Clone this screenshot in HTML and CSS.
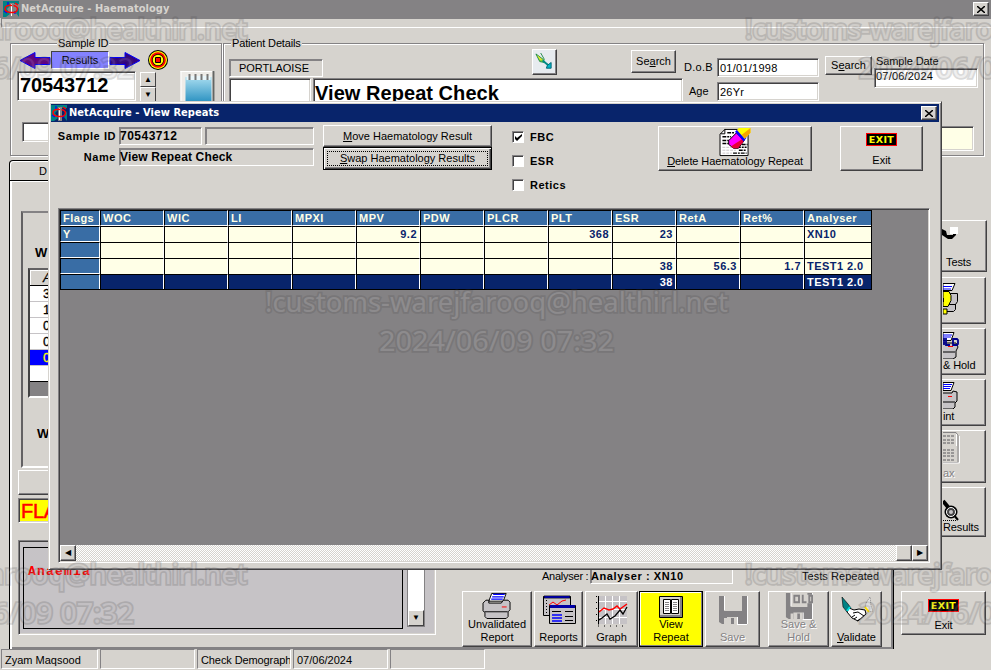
FILE: index.html
```
<!DOCTYPE html>
<html lang="en">
<head>
<meta charset="utf-8">
<title>NetAcquire - Haematology</title>
<link rel="stylesheet" href="styles.css">
</head>
<body>
<svg width="0" height="0" class="defs">
  <defs>
    <symbol id="app" viewBox="0 0 16 16"><path fill="#008284" d="M0 0h16v3H9L4 8l3 5-4 3H0z"/><path fill="#008284" d="M16 6l-3 6 3 4z"/><path fill="#848284" d="M7 2h4v14H7z"/><path fill="#fff" d="M8 3h1v12H8z"/><path fill="none" stroke="#00f" stroke-width="1.200" d="M5 1v4M1 10l3 2M12 10v3"/><path fill="none" stroke="#f00" stroke-width="1.500" d="M9 4.500c-4-.5-7 .5-7 3 0 5 12 5.500 12.500.5 0-2-2-3-4-3.500M12 2l3 2"/></symbol>
    <symbol id="printer" viewBox="0 0 32 28"><path fill="#fff" stroke="#000" d="M10.500 1.500h15l-3 8h-15z"/><path stroke="#00f" stroke-width="1.3" d="M12 2.500h12M11 5h12M10 7.500h12"/><path fill="#c6c3c6" stroke="#000" d="M4.500 8.500h3v3h13l2-3h5l2 2v8l-2 2v5l-2 2h-20l-2-2v-4l-2-2v-8z"/><path stroke="#000" fill="none" d="M3 20.500h24"/><path fill="#f00" d="M21 15h5v1h-5z"/></symbol>
    <symbol id="floppy" viewBox="0 0 30 30"><path fill="#848284" d="M1 1h5v15h18V1h5v28H9v-6H6v6H4l-3-2z"/><path fill="#fff" d="M6 1h1v14H6zM29 1h1v28h-1zM12 23h1v5h-1zM19 22h1v8h-1zM20 29h9v1h-9z"/><path fill="#d6d3ce" d="M9 22h10v7h-3v-6h-3v6H9z"/></symbol>
  </defs>
</svg>
<div class="desktop">
  <div class="bar main-bar"><svg class="app"><use href="#app"/></svg><span>NetAcquire - Haematology</span><i class="close"><svg viewBox="0 0 8 7"><path d="M0 0l8 7M8 0l-8 7"/></svg></i></div>
  <div class="strip"></div>
  <div class="top">
    <div class="group sample">
      <span class="legend">Sample ID</span>
      <div class="nav">
        <svg class="arrow" viewBox="0 0 32 18"><path fill="#630084" stroke="#00f" d="M1 9L16 1v5h15v7H16v4z"/></svg>
        <span class="results">Results</span>
        <svg class="arrow" viewBox="0 0 32 18"><path fill="#310084" stroke="#00f" d="M31 9L16 1v5H1v7h15v4z"/></svg>
        <svg class="target" viewBox="0 0 20 20"><circle cx="10" cy="10" r="10" fill="#000"/><circle cx="10" cy="10" r="9" fill="#ff0"/><circle cx="10" cy="10" r="7.800" fill="#f00"/><circle cx="10" cy="10" r="6" fill="#000"/><circle cx="10" cy="10" r="5.300" fill="#ff0"/><path fill="#f00" stroke="#000" d="M7.500 7.500h5v5h-5z"/></svg>
      </div>
      <div class="idrow">
        <div class="inset big idfield">70543712</div>
        <div class="spin"><i>&#9650;</i><i>&#9660;</i></div>
        <svg class="notebook" viewBox="0 0 34 36"><defs><linearGradient id="sky" x2="0" y2="1"><stop stop-color="#a8ddf0"/><stop offset="1" stop-color="#1383b8"/></linearGradient></defs><path fill="#eeece8" d="M0 0h34v36H0z"/><path fill="url(#sky)" d="M5 6h26v30H5z"/><path fill="#e9f6fa" d="M6 5h24v4H6z"/><path stroke="#777" stroke-width="2" d="M9 3v6M15 3v6M21 3v6M27 3v6"/><path stroke="#fff" d="M0 .5h34M.5 0v36"/><path stroke="#636563" stroke-width="2" d="M33 0v36"/></svg>
      </div>
      <div class="inset smallfield"></div>
    </div>
    <div class="group patient">
      <span class="legend">Patient Details</span>
      <div class="prow">
        <div class="who">
          <div class="tools">
            <div class="inset grey ward">PORTLAOISE</div>
            <div class="btn dart"><svg viewBox="0 0 20 20"><path fill="#84d731" stroke="#218a4a" d="M1 1l8 6 1 3-5-1zM6 0l4 7"/><path fill="#efe731" d="M2 2l6 5-3 0z"/><path fill="none" stroke="#008a84" stroke-width="2" d="M8 8l6 5"/><path fill="#00b6c6" stroke="#006573" d="M12 16l1-3 4-3v6z"/></svg></div>
            <div class="btn search"><span>Se<u>a</u>rch</span></div>
          </div>
          <div class="names"><div class="inset title"></div><div class="inset big name">View Repeat Check</div></div>
        </div>
        <div class="dob"><span>D.o.B</span><div class="inset">01/01/1998</div><span>Age</span><div class="inset">26Yr</div></div>
        <div class="btn search2"><span>S<u>e</u>arch</span></div>
        <div class="sdate"><span>Sample Date</span><div class="inset">07/06/2024</div></div>
      </div>
      <div class="inset cream"></div>
    </div>
  </div>
  <div class="middle">
    <div class="tabs">
      <div class="tab">D</div>
      <div class="page">
        <div class="frame">
          <b>W</b>
          <div class="counts"><i class="hd">A</i><i>3</i><i>1</i><i>0</i><i>0</i><i class="on">0</i><i class="last"></i></div>
          <b class="w2">W</b>
        </div>
        <div class="btn blank"></div>
        <div class="inset flag">FLA</div>
        <div class="foot">
          <div class="inset comment"><div class="note">Anaemia</div><div class="vscroll"><i>&#9660;</i></div></div>
          <div class="actions">
            <div class="anrow"><span>Analyser :</span><div class="inset grey bold">Analyser : XN10</div><span class="rep">Tests Repeated</span></div>
            <div class="buttons">
              <div class="btn b1"><svg class="pr"><use href="#printer"/></svg><span>Unvalidated<br>Report</span></div>
              <div class="btn b2"><svg class="ic" viewBox="0 0 34 30"><path fill="#c6c3c6" stroke="#000" d="M1.500 1.500h27v19h-27z"/><path fill="#00f" stroke="#000" stroke-width=".8" d="M2 1h26v2H2z"/><path stroke="#000" stroke-dasharray="1 2" d="M4.500 5v14"/><path fill="none" stroke="#f00" d="M7 10l4-3 4 3 5-4 4-1"/><path fill="#c6c3c6" stroke="#000" d="M7.500 10.500h26v18h-26z"/><path fill="#0000a5" d="M8 10h25v3H8z"/><path stroke="#000" d="M10 16.500h9M23 16.500h8M23 21.500h8M23 25.500h8"/><path stroke="#00f" stroke-width="1.500" d="M10 20h10M10 23h10M10 26h10"/></svg><span>Reports</span></div>
              <div class="btn b3"><svg class="ic" viewBox="0 0 32 32"><path fill="#c6c3c6" d="M3 1h28v28H3z"/><path stroke="#fff" d="M9.500 1v28M16.500 1v28M23.500 1v28M3 6.500h28M3 14.500h28M3 22.500h28"/><path stroke="#000" fill="none" d="M2.500 1v28.500"/><path stroke="#000" stroke-dasharray="1 5" d="M2 31h29M.5 1v28"/><path stroke="#f00" stroke-width="1.500" fill="none" d="M3 17l5-4 5 2 4-1 4-3 3 3 7-5"/><path stroke="#000" stroke-width="1.300" fill="none" d="M3 25l3-2 5-4 3 5 5-3 5-6 3 4 4-7"/></svg><span>Graph</span></div>
              <div class="btn b4"><svg class="book" viewBox="0 0 24 22"><path fill="#848284" stroke="#000" d="M.5.500h23v21H.5z"/><path fill="#d6d3ce" d="M1 1h20v18H1z"/><path fill="#fff" stroke="#000" d="M4.500 3.500h7v14h-7zM12.500 3.500h7v14h-7z"/><path stroke="#848284" d="M6 6.500h4M6 8.500h4M6 10.500h4M6 12.500h4M6 14.500h4M14 6.500h4M14 8.500h4M14 10.500h4M14 12.500h4M14 14.500h4"/></svg><span>View<br>Repeat</span></div>
              <div class="btn b5 off"><svg class="fl"><use href="#floppy"/></svg><span>Save</span></div>
              <div class="btn b6 off"><svg class="fl" viewBox="0 0 30 30"><use href="#floppy"/><path fill="#d6d3ce" d="M8 3h22v9H8z"/><path fill="none" stroke="#848284" stroke-width="2" d="M10 4h5v7h-5zM19 3v8h4M26 4h3v7h-3z"/></svg><span>Save &amp;<br>Hold</span></div>
              <div class="btn b7"><svg class="ic hands" viewBox="0 0 32 28"><path fill="#008284" stroke="#000" stroke-width=".6" d="M1 1l6 7 3 4-4 4-4-5z"/><path fill="#fff" stroke="#000" d="M8 12l5 2 5-1 6 1 1 4-8 7-6-3-5-6z"/><path fill="none" stroke="#000" d="M12 17l5-1 6 4M11 21l3-2m-1 4l3-2m0 4l3-2"/><path fill="#e7e7e7" stroke="#848284" stroke-dasharray="1 1" d="M25 7l4-6 1 9 2 5-4 1-4-4z"/><path stroke="#ffdf00" stroke-width="2" d="M24 11l4 5"/><path stroke="#00dfde" stroke-width="2" d="M9 11l-3 4"/></svg><span><u>V</u>alidate</span></div>
            </div>
          </div>
        </div>
      </div>
    </div>
    <div class="side">
      <div class="btn s1"><svg viewBox="0 0 20 16"><path d="M0 3l4 2 1 4 6 0v-3h3v3l-4 4H6L0 9z"/><path fill="#fff" d="M8 1h8v7H8z"/></svg><span>Tests</span></div>
      <div class="btn s2"><svg viewBox="0 0 20 36"><path fill="#c6c3c6" stroke="#000" d="M6 11.500h8.500v8l-2 3v5l-2 2H2"/><path stroke="#000" d="M6 22.500h7"/><path fill="#fff" stroke="#000" d="M0 1.500h12l-3 7H0z"/><path stroke="#00f" d="M0 4.500h9M0 7h8"/><path fill="#ff0" stroke="#000" d="M0 9.500h6l2 4v5l-3 6H0zM0 27h4v5H0z"/><path d="M0 16h1v4H0z"/></svg></div>
      <div class="btn s3"><svg viewBox="0 0 20 28"><path fill="#fff" stroke="#000" d="M0 1.500h11l-3 8H0z"/><path stroke="#00f" d="M0 4h9M0 6h8"/><path fill="#c6c3c6" stroke="#000" d="M0 12h13l2 4-2 4v6l-3 2H0M0 21h12"/><path fill="none" stroke="#00008c" stroke-width="1.800" d="M1 7v7M3 7v7h4M10 8h4l1 1v4l-1 1h-4z"/><path fill="#f00" d="M5 15h5v1H5z"/></svg><span>&amp; Hold</span></div>
      <div class="btn s4"><svg viewBox="0 0 20 28"><path fill="#fff" stroke="#000" d="M0 1.500h11l-3 8H0z"/><path stroke="#00f" d="M0 3.500h9M0 5.500h8M0 7.500h7"/><path fill="#c6c3c6" stroke="#000" d="M0 12h9l1-2 4 1v9l-2 2v4l-2 2H0M0 21h12"/><path fill="#f00" d="M5 15h4v1H5z"/></svg><span>int</span></div>
      <div class="btn s5 off"><svg viewBox="0 0 20 34"><path fill="#d6d3ce" stroke="#848284" d="M0 1.500h13l2 3v27H0"/><path stroke="#fff" fill="none" d="M13.500 3v12M16.500 5v27H0"/><path fill="none" stroke="#848284" stroke-width="1.500" stroke-dasharray="3 1" d="M0 5h11M0 9h11M0 12h11M0 19h12M0 22h12M0 25h12M0 29h12"/></svg><span>ax</span></div>
      <div class="btn s6"><svg viewBox="0 0 20 22"><path stroke="#000" stroke-width="4" d="M0 2l5 6"/><path stroke="#000" stroke-width="2" d="M10 15l5 6"/><circle cx="8" cy="13" r="6.500" fill="#000"/><circle cx="8" cy="13" r="4.500" fill="#424142" stroke="#fff"/><circle cx="8" cy="13" r="2" fill="#c6c3c6"/><path d="M0 21.500h14" stroke="#000" stroke-dasharray="1 1"/></svg><span>Results</span></div>
      <div class="btn s7"><span class="exit">EXIT</span><span>Exit</span></div>
    </div>
  </div>
  <div class="status"><i>Zyam Maqsood</i><i></i><i>Check Demograph</i><i>07/06/2024</i><i></i></div>

  <div class="dialog">
    <div class="bar"><svg class="app"><use href="#app"/></svg><span>NetAcquire - View Repeats</span><i class="close"><svg viewBox="0 0 8 7"><path d="M0 0l8 7M8 0l-8 7"/></svg></i></div>
    <div class="controls">
      <div class="ids bold"><span>Sample ID</span><div class="inset grey">70543712</div><div class="inset grey"></div><span>Name</span><div class="inset grey wide">View Repeat Check</div></div>
      <div class="moves"><div class="btn"><span><u>M</u>ove Haematology Result</span></div><div class="btn focus"><span><u>S</u>wap Haematology Results</span></div></div>
      <div class="checks bold">
        <label><i class="box"><svg viewBox="0 0 7 7"><path d="M0 2v3l2 2 5-5V0L2 4z"/></svg></i>FBC</label>
        <label><i class="box"></i>ESR</label>
        <label><i class="box"></i>Retics</label>
      </div>
      <div class="btn delete"><svg viewBox="0 0 32 30"><path fill="#fff" stroke="#000" d="M5.500 1.500h24v27h-29v-22z"/><path fill="none" stroke="#000" d="M5.500 1v5H1"/><path stroke="#000" stroke-width="1.500" stroke-dasharray="4 1 2 1" d="M8 5h8M3 9h9M3 13h8M3 16h7M18 20h10M20 23h8M14 26h14M23 17h6"/><path stroke="#c6c3c6" stroke-dasharray="3 1" d="M3 20h10M3 23h14M3 26h10"/><path fill="#f0f" stroke="#000" d="M9.500 13l8-8 8 8-6 8h-5l-5-4z"/><path fill="#e7003a" d="M12 19l12-8 1 3-6 7h-5z"/><path fill="#00f" d="M16 4l3-3 9 9-3 4z"/><path fill="#ff0" d="M18 2l2-2h12v5l-6 6z"/><path fill="#f7a600" d="M26 11l-3-4 9-7v5z"/></svg><span><u>D</u>elete Haematology Repeat</span></div>
      <div class="btn quit"><span class="exit">EXIT</span><span>Exit</span></div>
    </div>
    <div class="gridbox">
      <table>
        <thead><tr><th class="f">Flags</th><th>WOC</th><th>WIC</th><th>LI</th><th>MPXI</th><th>MPV</th><th>PDW</th><th>PLCR</th><th>PLT</th><th>ESR</th><th>RetA</th><th>Ret%</th><th class="l">Analyser</th></tr></thead>
        <tbody>
          <tr><th>Y</th><td></td><td></td><td></td><td></td><td>9.2</td><td></td><td></td><td>368</td><td>23</td><td></td><td></td><td class="l">XN10</td></tr>
          <tr><th></th><td></td><td></td><td></td><td></td><td></td><td></td><td></td><td></td><td></td><td></td><td></td><td class="l"></td></tr>
          <tr><th></th><td></td><td></td><td></td><td></td><td></td><td></td><td></td><td></td><td>38</td><td>56.3</td><td>1.7</td><td class="l">TEST1 2.0</td></tr>
          <tr class="sel"><th></th><td></td><td></td><td></td><td></td><td></td><td></td><td></td><td></td><td>38</td><td></td><td></td><td class="l">TEST1 2.0</td></tr>
        </tbody>
      </table>
      <div class="hscroll"><i>&#9664;</i><i class="thumb"></i><i>&#9654;</i></div>
    </div>
  </div>

  <svg class="marks" viewBox="0 0 991 670">
    <g class="mk">
      <text x="-216" y="39" textLength="463" lengthAdjust="spacingAndGlyphs">!customs-warejfarooq@healthirl.net</text><text x="-101" y="78" textLength="235" lengthAdjust="spacingAndGlyphs">2024/06/09 07:32</text>
      <text x="745" y="39" textLength="463" lengthAdjust="spacingAndGlyphs">!customs-warejfarooq@healthirl.net</text><text x="859" y="78" textLength="235" lengthAdjust="spacingAndGlyphs">2024/06/09 07:32</text>
      <text x="-216" y="584" textLength="463" lengthAdjust="spacingAndGlyphs">!customs-warejfarooq@healthirl.net</text><text x="-101" y="623" textLength="235" lengthAdjust="spacingAndGlyphs">2024/06/09 07:32</text>
      <text x="745" y="584" textLength="463" lengthAdjust="spacingAndGlyphs">!customs-warejfarooq@healthirl.net</text><text x="859" y="623" textLength="235" lengthAdjust="spacingAndGlyphs">2024/06/09 07:32</text>
      <text x="265" y="312" textLength="463" lengthAdjust="spacingAndGlyphs">!customs-warejfarooq@healthirl.net</text><text x="379" y="351" textLength="235" lengthAdjust="spacingAndGlyphs">2024/06/09 07:32</text>
    </g>
  </svg>
</div>
</body>
</html>
```
FILE: styles.css
```
* { box-sizing: border-box; }
body { margin: 0; background: #d6d3ce; color: #000; font: 11px/13px "Liberation Sans", Arial, sans-serif; }
i { font-style: normal; }
u { text-underline-offset: 1px; }
.defs { position: absolute; }
.desktop { position: relative; width: 991px; height: 670px; overflow: hidden; display: flex; flex-direction: column; }
.bold { font-weight: bold; letter-spacing: .55px; }

.bar { display: flex; align-items: center; height: 18px; flex: none; background: #08246b; color: #fff; font: bold 11px/18px "DejaVu Sans Condensed", "DejaVu Sans", sans-serif; font-stretch: condensed; letter-spacing: .05px; }
.main-bar { background: #848284; color: #d6d3ce; padding-left: 3px; }
.app { width: 16px; height: 16px; margin-right: 2px; }
.close { width: 16px; height: 14px; margin: 0 2px 0 auto; background: #d6d3ce; border: 1px solid; border-color: #fff #424142 #424142 #fff; box-shadow: inset -1px -1px #848284; display: flex; align-items: center; justify-content: center; }
.close svg { width: 8px; height: 7px; stroke: #000; stroke-width: 1.500; }
.strip { height: 10px; flex: none; border-top: 1px solid #848284; border-bottom: 1px solid #fff; margin-left: 1px; border-left: 1px solid #848284; }

.inset { background: #fff; border: 1px solid; border-color: #848284 #fff #fff #848284; box-shadow: inset 1px 1px #424142, inset -1px -1px #d6d3ce; white-space: nowrap; overflow: hidden; }
.grey { background: #d6d3ce; box-shadow: inset 1px 1px #848284; }
.btn { background: #d6d3ce; border: 1px solid; border-color: #fff #424142 #424142 #fff; box-shadow: inset -1px -1px #848284; display: flex; flex-direction: column; align-items: center; text-align: center; flex: none; white-space: nowrap; }
.big { font-weight: bold; font-size: 20px; line-height: 28px; }

.top { display: flex; flex: none; height: 128px; padding: 15px 0 0 10px; }
.group { border: 1px solid #848284; box-shadow: 1px 1px #fff, inset 1px 1px #fff; height: 113px; }
.legend { display: block; width: max-content; margin-top: -7px; background: #d6d3ce; padding: 0 1px; height: 13px; }
.sample { width: 212px; margin-right: 1px; }
.sample .legend { margin-left: 46px; letter-spacing: -.1px; }
.patient { width: 761px; }
.patient .legend { margin-left: 7px; letter-spacing: -.15px; }
.nav { display: flex; align-items: center; padding-left: 8px; height: 20px; margin-top: 0; }
.arrow { width: 32px; height: 19px; }
.results { width: 58px; height: 18px; background: #8482ff; border: 1px solid; border-color: #424142 #fff #fff #424142; text-align: center; line-height: 16px; }
.target { width: 20px; height: 20px; margin-left: 7px; }
.idrow { display: flex; padding: 1px 0 0 6px; height: 50px; }
.idfield { width: 119px; height: 30px; padding-left: 2px; margin-top: 0; line-height: 27px; letter-spacing: -.1px; }
.spin { width: 16px; margin: 1px 24px 0 4px; }
.spin i { display: block; height: 15px; border: 1px solid; border-color: #fff #424142 #424142 #fff; font-size: 8px; line-height: 13px; text-align: center; }
.notebook { width: 35px; height: 36px; }
.smallfield { width: 100px; height: 20px; margin-left: 11px; margin-top: 2px; }

.prow { display: flex; padding-left: 5px; height: 77px; margin-top: -2px; }
.who { width: 454px; padding-top: 1px; }
.tools { display: flex; height: 30px; }
.ward { width: 94px; height: 18px; margin: 10px 209px 0 0; text-align: center; line-height: 16px; padding-right: 4px; }
.dart { width: 25px; height: 26px; margin-right: 74px; background: #e7ebef; justify-content: center; }
.dart svg { width: 19px; height: 19px; }
.search { width: 45px; height: 23px; margin-top: 1px; line-height: 20px; }
.names { display: flex; gap: 2px; }
.title { width: 82px; height: 27px; margin-top: -1px; }
.name { width: 370px; height: 27px; margin-top: -1px; letter-spacing: .05px; padding-left: 1px; line-height: 28px; }
.dob { display: grid; grid-template-columns: 34px 102px; grid-template-rows: 19px 19px; row-gap: 5px; padding-top: 10px; line-height: 18px; }
.dob span:nth-of-type(1) { padding-left: 1px; letter-spacing: .3px; }
.dob span:nth-of-type(2) { padding-left: 6px; }
.dob .inset { padding-left: 2px; line-height: 18px; letter-spacing: .25px; }
.search2 { width: 47px; height: 19px; margin: 8px 2px 0 6px; line-height: 17px; }
.sdate { width: 104px; padding-top: 7px; }
.sdate span { display: block; height: 13px; padding-left: 2px; letter-spacing: -.1px; }
.sdate .inset { height: 20px; line-height: 14px; padding-left: 1px; letter-spacing: .2px; }
.cream { background: #ffffe7; width: 120px; height: 25px; margin: 1px 9px 0 auto; }

.middle { display: flex; height: 493px; flex: none; padding-left: 9px; }
.tabs { width: 885px; padding-top: 4px; }
.tab { width: 120px; height: 20px; border: 1px solid #000; border-bottom: 0; border-radius: 4px 0 0 0; padding: 4px 0 0 29px; box-shadow: inset 1px 1px #fff; }
.page { height: 469px; border: 1px solid #000; border-width: 1px 1px 0 1px; box-shadow: inset 2px 1px #fff, inset 0 -2px #848284, inset -2px 0 #848284; padding: 30px 0 0 8px; }
.frame { width: 500px; height: 257px; border: 2px solid; border-color: #848284 #fff #fff #636163; margin-left: 3px; padding: 33px 0 0 5px; }
.frame b { display: block; padding-left: 7px; font-size: 13px; height: 22px; }
.frame .w2 { padding-top: 29px; padding-left: 9px; }
.counts { width: 100px; height: 130px; background: #848284; border: 2px solid; border-color: #636163 #fff #fff #424142; }
.counts i { display: block; height: 16px; background: #fff; border-bottom: 1px solid #c6c3c6; padding-left: 13px; font: 13px/15px "Liberation Sans", sans-serif; -webkit-text-stroke: .3px; }
.counts .hd { background: #d6d3ce; border-bottom: 1px solid #000; font-style: italic; box-shadow: inset 1px 1px #fff; }
.counts .on { background: #00f; color: #ff0; }
.counts .last { border-bottom-color: #000; }
.blank { width: 500px; height: 25px; margin-top: 2px; }
.flag { width: 500px; height: 25px; margin-top: 3px; background: #ff0; color: #f00; font-size: 20px; line-height: 25px; letter-spacing: -.3px; padding-left: 2px; -webkit-text-stroke: .5px #f00; }
.foot { display: flex; margin-top: 17px; height: 107px; }
.comment { width: 418px; height: 95px; background: #c6c3c6; display: flex; padding: 6px 0 0 4px; }
.note { width: 380px; height: 82px; border: 1px solid #000; color: #f00; font: bold 13px/14px "Liberation Mono", monospace; padding: 17px 0 0 4px; letter-spacing: 1.200px; }
.vscroll { width: 18px; height: 80px; margin-left: 4px; background: #fff; border: 1px solid #848284; display: flex; align-items: flex-end; }
.vscroll i { height: 16px; width: 16px; background: #d6d3ce; border: 1px solid; border-color: #fff #424142 #424142 #fff; font-size: 8px; line-height: 14px; text-align: center; }
.actions { width: 450px; padding-left: 26px; }
.anrow { display: flex; padding: 30px 0 0 80px; height: 51px; line-height: 13px; white-space: nowrap; }
.anrow span:first-child { width: 46px; letter-spacing: -.25px; }
.anrow .inset { width: 143px; height: 16px; margin: -2px 69px 0 2px; line-height: 14px; letter-spacing: .6px; font-size: 11px; }
.anrow .rep { letter-spacing: .05px; }
.buttons { display: flex; line-height: 13px; }
.buttons .btn { height: 56px; margin-right: 2px; justify-content: flex-end; padding-bottom: 2px; }
.buttons .b1 { width: 70px; } .buttons .b2 { width: 49px; } .buttons .b3 { width: 53px; margin-right: 1px; }
.buttons .b4 { width: 64px; background: #ff0; border-color: #000; box-shadow: inset -1px -1px #848284, inset 1px 1px #fff; }
.buttons .b5 { width: 55px; margin-right: 8px; } .buttons .b6 { width: 61px; } .buttons .b7 { width: 51px; margin-right: 0; }
.pr { width: 32px; height: 28px; margin-bottom: -1px; }
.ic { width: 32px; height: 32px; margin-bottom: 4px; }
.b2 .ic { width: 34px; height: 30px; margin-bottom: 6px; }
.b7 .ic { height: 28px; margin-bottom: 7px; }
.book { width: 24px; height: 22px; }
.fl { width: 30px; height: 30px; margin-bottom: 6px; }
.b6 .fl { height: 28px; margin-bottom: -2px; }
.off { color: #848284; text-shadow: 1px 1px #fff; }

.side { width: 93px; padding: 64px 0 0 7px; }
.side .btn { width: 85px; padding-left: 41px; align-items: flex-start; margin-bottom: 4px; justify-content: flex-end; padding-bottom: 2px; letter-spacing: -.1px; }
.side svg { width: 20px; }
.side .s1 { height: 52px; width: 86px; margin-bottom: 5px; padding-left: 44px; } .s1 svg { height: 16px; margin: 0 0 14px -4px; }
.side .s2 { height: 47px; } .s2 svg { height: 36px; margin-bottom: 3px; }
.side .s3 { height: 47px; } .s3 svg { height: 28px; }
.side .s4 { height: 47px; } .s4 svg { height: 28px; margin-bottom: 1px; }
.side .s5 { height: 53px; } .s5 svg { height: 34px; margin-bottom: 2px; }
.side .s6 { height: 50px; } .s6 svg { height: 22px; }
.side .s7 { height: 44px; padding-left: 0; margin-top: 54px; align-items: center; padding-bottom: 2px; }
.exit { background: #000; color: #ff0; border: 1px solid #f00; width: 31px; height: 13px; font: bold 9.500px/11px "DejaVu Sans", sans-serif; letter-spacing: .4px; margin-bottom: 7px; text-align: center; }

.status { display: flex; height: 20px; padding-left: 1px; gap: 2px; }
.status i { height: 20px; width: 95px; border: 1px solid; border-color: #848284 #fff #fff #848284; padding: 4px 0 0 3px; white-space: nowrap; overflow: hidden; }
.status i:nth-child(1) { width: 97px; }
.status i:nth-child(3) { width: 94px; letter-spacing: -.1px; }

.dialog { position: absolute; left: 48px; top: 101px; width: 894px; height: 469px; background: #d6d3ce; border: 1px solid; border-color: #d6d3ce #424142 #424142 #d6d3ce; box-shadow: inset 1px 1px #fff, inset -1px -1px #848284; padding: 2px; }
.controls { display: flex; height: 86px; padding-left: 1px; }
.ids { display: grid; grid-template-columns: 64px 83px 109px; grid-template-rows: 18px 18px; gap: 3px; padding-top: 5px; line-height: 18px; width: 262px; letter-spacing: .55px; }
.ids span { text-align: right; }
.ids .inset { line-height: 16px; font-size: 12px; letter-spacing: .5px; }
.ids .wide { grid-column: 2 / 4; letter-spacing: .15px; }
.moves { width: 169px; margin: 3px 0 0 9px; }
.moves .btn { height: 22px; line-height: 20px; }
.moves .focus { height: 23px; border-color: #000; box-shadow: inset 1px 1px #fff, inset -1px -1px #424142, inset -2px -2px #848284; padding: 3px; }
.focus span { border: 1px dotted #000; width: 161px; height: 15px; line-height: 13px; }
.checks { margin: 9px 0 0 20px; width: 146px; letter-spacing: .5px; }
.checks label { display: flex; height: 24px; gap: 6px; }
.box { width: 12px; height: 12px; background: #fff; border: 1px solid; border-color: #848284 #fff #fff #848284; box-shadow: inset 1px 1px #424142; padding: 2px; }
.box svg { display: block; width: 7px; height: 7px; }
.delete { width: 154px; height: 45px; margin-top: 4px; letter-spacing: -.1px; }
.delete svg { width: 32px; height: 29px; margin: 1px 0 -2px; flex: none; }
.quit { width: 83px; height: 45px; margin: 4px 0 0 28px; padding-top: 6px; }
.quit .exit { margin-bottom: 8px; }
.gridbox { width: 872px; height: 355px; margin-left: 7px; background: #848284; border: 1px solid; border-color: #848284 #fff #fff #848284; box-shadow: inset 1px 1px #424142, inset -1px -1px #d6d3ce; padding: 1px; display: flex; flex-direction: column; justify-content: space-between; }
table { border-spacing: 0; table-layout: fixed; width: 812px; border-right: 1px solid #000; border-bottom: 1px solid #000; font-weight: bold; letter-spacing: .5px; }
th, td { height: 16px; padding: 0 2px 0 2px; border: 1px solid #000; border-right-color: #fff; border-bottom: 0; line-height: 13px; width: 64px; }
th { background: #396da5; color: #ffffe7; text-align: left; border-bottom: 1px solid #fff; line-height: 12px; }
th.f { width: 40px; }
td { background: #ffffe7; color: #08246b; text-align: right; }
.l { width: 67px; text-align: left; border-right: 0; letter-spacing: .45px; }
.sel td { background: #08246b; color: #fff; }
.sel td, .sel th { height: 15px; border-bottom: 0; }
.hscroll { height: 16px; display: flex; justify-content: space-between; background: repeating-conic-gradient(#fff 0 25%, #d6d3ce 0 50%) 0 0 / 2px 2px; }
.hscroll i { width: 16px; height: 16px; background: #d6d3ce; border: 1px solid; border-color: #fff #424142 #424142 #fff; box-shadow: inset -1px -1px #848284; font-size: 8px; line-height: 13px; text-align: center; }
.hscroll .thumb { margin-left: auto; }

.marks { position: absolute; inset: 0; width: 991px; height: 670px; pointer-events: none; }
.mk text { font: 27px "Noto Sans", "DejaVu Sans", sans-serif; fill: #b5b3b5; stroke: #4a494a; stroke-width: 3.500px; paint-order: stroke; opacity: .2; }
```
